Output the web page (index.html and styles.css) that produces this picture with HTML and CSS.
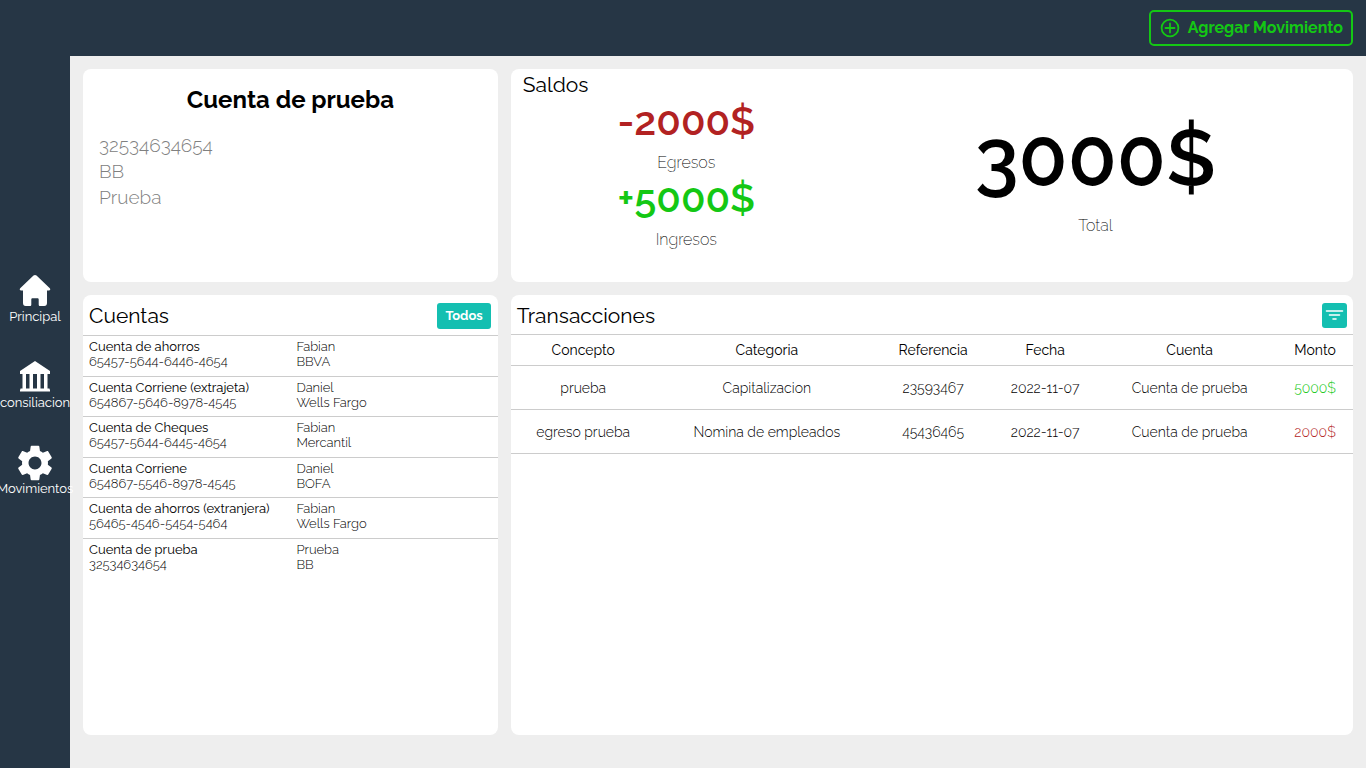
FILE: index.html
```html
<!DOCTYPE html>
<html lang="es">
<head>
<meta charset="utf-8">
<meta name="viewport" content="width=device-width, initial-scale=1">
<title>Cuentas</title>
<link rel="stylesheet" href="styles.css">
</head>
<body>
<div class="app">
  <header class="topbar">
    <button class="add-button" type="button">
      <svg class="add-icon" viewBox="0 0 20 20" fill="none" stroke="currentColor" stroke-width="1.8" aria-hidden="true"><circle cx="10" cy="10" r="8.4"/><path d="M10 5.500v9M5.500 10h9" stroke-linecap="round"/></svg>
      <span>Agregar Movimiento</span>
    </button>
  </header>
  <nav class="sidebar">
    <a class="nav-link" href="#principal">
      <svg class="nav-icon" viewBox="0 0 36 36" fill="currentColor" aria-hidden="true"><path d="M18 2c.6 0 1 .2 1.500.6l13.300 12.600c.9.900.5 2.300-.9 2.300h-1.900v12.500c0 2.100-1 3-2.700 3H23.200c-1 0-1.500-.5-1.500-1.500v-5c0-.8-.5-1.300-1.300-1.300h-4.800c-.8 0-1.300.5-1.300 1.300v5c0 1-.5 1.500-1.500 1.500H8.700C7 33 6 32.100 6 30V17.500H4.100c-1.400 0-1.800-1.400-.9-2.300L16.500 2.600C17 2.200 17.400 2 18 2z"/></svg>
      <span>Principal</span>
    </a>
    <a class="nav-link" href="#consiliacion">
      <svg class="nav-icon" viewBox="0 0 36 36" fill="currentColor" aria-hidden="true"><path d="M18 2 33 12v3H3v-3zM5.500 15H9v15H5.500zM12.500 15H16v15h-3.500zM20 15h3.500v15H20zM27 15h3.500v15H27zM3.500 29.500h29v1h.5v2H3v-2h.5z"/></svg>
      <span>consiliacion</span>
    </a>
    <a class="nav-link" href="#movimientos">
      <svg class="nav-icon" viewBox="2 2 20 20" fill="currentColor" aria-hidden="true"><path d="M19.140 12.940c.04-.3.060-.61.060-.94 0-.32-.020-.64-.070-.94l2.030-1.580c.18-.14.230-.41.120-.61l-1.920-3.320c-.12-.22-.37-.29-.59-.22l-2.390.96c-.5-.38-1.030-.7-1.620-.94l-.36-2.540c-.040-.24-.24-.41-.48-.41h-3.840c-.24 0-.43.170-.47.410l-.36 2.540c-.59.240-1.130.570-1.620.94l-2.390-.96c-.22-.080-.47 0-.59.220L2.740 8.870c-.12.210-.080.470.120.610l2.030 1.580c-.050.300-.090.630-.090.940s.020.640.070.94l-2.030 1.580c-.18.140-.23.410-.12.610l1.920 3.320c.12.220.37.290.59.220l2.390-.96c.5.380 1.030.7 1.620.94l.36 2.540c.050.240.24.410.48.410h3.840c.24 0 .44-.17.470-.41l.36-2.540c.59-.24 1.130-.56 1.620-.94l2.390.96c.22.080.47 0 .59-.22l1.920-3.320c.12-.22.070-.47-.12-.61l-2.010-1.580zM12 15.600c-1.980 0-3.600-1.620-3.600-3.600s1.620-3.600 3.600-3.600 3.600 1.620 3.600 3.600-1.620 3.600-3.600 3.600z"/></svg>
      <span>Movimientos</span>
    </a>
  </nav>
  <main class="content">
    <section class="card account">
      <h1 class="account-name">Cuenta de prueba</h1>
      <p class="account-line">32534634654</p>
      <p class="account-line">BB</p>
      <p class="account-line">Prueba</p>
    </section>
    <section class="card balances">
      <h2 class="card-title balances-title">Saldos</h2>
      <div class="balances-body">
        <div class="flows">
          <strong class="amount expense">-2000$</strong>
          <span class="amount-label">Egresos</span>
          <strong class="amount income">+5000$</strong>
          <span class="amount-label">Ingresos</span>
        </div>
        <div class="total">
          <strong class="total-amount">3000$</strong>
          <span class="amount-label">Total</span>
        </div>
      </div>
    </section>
    <section class="card">
      <div class="card-head">
        <h2 class="card-title">Cuentas</h2>
        <button class="all-button" type="button">Todos</button>
      </div>
      <ul class="accounts">
        <li class="account-row"><div><b class="row-name">Cuenta de ahorros</b><span>65457-5644-6446-4654</span></div><div><span>Fabian</span><span>BBVA</span></div></li>
        <li class="account-row"><div><b class="row-name">Cuenta Corriene (extrajeta)</b><span>654867-5646-8978-4545</span></div><div><span>Daniel</span><span>Wells Fargo</span></div></li>
        <li class="account-row"><div><b class="row-name">Cuenta de Cheques</b><span>65457-5644-6445-4654</span></div><div><span>Fabian</span><span>Mercantil</span></div></li>
        <li class="account-row"><div><b class="row-name">Cuenta Corriene</b><span>654867-5546-8978-4545</span></div><div><span>Daniel</span><span>BOFA</span></div></li>
        <li class="account-row"><div><b class="row-name">Cuenta de ahorros (extranjera)</b><span>56465-4546-5454-5464</span></div><div><span>Fabian</span><span>Wells Fargo</span></div></li>
        <li class="account-row"><div><b class="row-name">Cuenta de prueba</b><span>32534634654</span></div><div><span>Prueba</span><span>BB</span></div></li>
      </ul>
    </section>
    <section class="card">
      <div class="card-head">
        <h2 class="card-title">Transacciones</h2>
        <button class="filter-button" type="button" aria-label="Filtrar">
          <svg class="filter-icon" viewBox="0 0 19 19" stroke="currentColor" stroke-width="1.600" stroke-linecap="round" aria-hidden="true"><path d="M1.500 5h16M4.500 9h10M8 13h3"/></svg>
        </button>
      </div>
      <table class="movements">
        <colgroup><col class="col-concept"><col class="col-category"><col class="col-reference"><col class="col-date"><col class="col-account"><col class="col-amount"></colgroup>
        <thead>
          <tr><th>Concepto</th><th>Categoria</th><th>Referencia</th><th>Fecha</th><th>Cuenta</th><th>Monto</th></tr>
        </thead>
        <tbody>
          <tr><td>prueba</td><td>Capitalizacion</td><td>23593467</td><td>2022-11-07</td><td>Cuenta de prueba</td><td class="income">5000$</td></tr>
          <tr><td>egreso prueba</td><td>Nomina de empleados</td><td>45436465</td><td>2022-11-07</td><td>Cuenta de prueba</td><td class="expense">2000$</td></tr>
        </tbody>
      </table>
    </section>
  </main>
</div>
</body>
</html>
```
FILE: styles.css
```css
* { box-sizing: border-box; }
body {
  margin: 0;
  font-family: Raleway, Lato, "Open Sans", sans-serif;
  background: #eee;
  color: #000;
}
h1, h2, p, ul { margin: 0; padding: 0; }
button { font: inherit; cursor: pointer; }

.app {
  display: grid;
  grid-template: 56px 1fr / 70px minmax(0, 1fr);
  min-height: 100vh;
}
.topbar {
  grid-column: 1 / -1;
  display: flex;
  align-items: center;
  justify-content: flex-end;
  padding: 0 13px;
  background: #263645;
}
.add-button {
  display: flex;
  align-items: center;
  gap: 8px;
  height: 36px;
  padding: 0 8px 0 9px;
  border: 2px solid #14c814;
  border-radius: 5px;
  background: none;
  color: #14c814;
  font-size: 16px;
  font-weight: 700;
  line-height: 20px;
  white-space: nowrap;
}
.add-icon { width: 20px; height: 20px; }

.sidebar {
  display: flex;
  flex-direction: column;
  justify-content: center;
  gap: 35px;
  padding-bottom: 55px;
  background: #263645;
}
.nav-link {
  display: flex;
  flex-direction: column;
  align-items: center;
  color: #fff;
  font-size: 13px;
  line-height: 15px;
  text-decoration: none;
}
.nav-icon { width: 36px; height: 36px; }

.content {
  display: grid;
  grid-template: 33fr 68fr / 33fr 67fr;
  gap: 13px;
  padding: 13px 13px 33px;
}
.card {
  min-width: 0;
  border-radius: 8px;
  background: #fff;
}
.card-title { font-size: 21px; font-weight: 400; line-height: 26px; }
.card-head {
  display: flex;
  align-items: center;
  justify-content: space-between;
  height: 39px;
  padding: 2px 6px 0;
}

.account { padding: 16px; }
.account-name {
  margin-bottom: 17px;
  font-size: 24px;
  line-height: 30px;
  text-align: center;
}
.account-line {
  color: #808080;
  font-size: 19px;
  font-weight: 300;
  line-height: 26px;
}

.balances-title { padding: 3px 12px 0; }
.balances-body {
  display: grid;
  grid-template-columns: 351fr 467fr;
  padding-right: 24px;
}
.flows, .total { display: flex; flex-direction: column; align-items: center; }
.total { padding-top: 12px; }
.amount { font-size: 40px; font-weight: 600; line-height: 46px; }
.amount-label {
  margin-top: 6px;
  font-size: 16px;
  font-weight: 200;
  line-height: 25px;
}
.total-amount { font-size: 80px; font-weight: 600; line-height: 97px; }
.income { color: #14c814; }
.expense { color: #b22222; }

.all-button {
  height: 26px;
  margin-right: 1px;
  padding: 0 8px;
  border: 0;
  border-radius: 3px;
  background: #14bfb1;
  color: #fff;
  font-size: 13px;
  font-weight: 700;
}
.filter-button {
  display: flex;
  width: 25px;
  height: 25px;
  padding: 3px;
  border: 0;
  border-radius: 3px;
  background: #14bfb1;
  color: #fff;
}
.filter-icon { width: 19px; height: 19px; }

.accounts { margin-top: 1px; list-style: none; }
.account-row {
  display: grid;
  grid-template-columns: 1fr 1fr;
  padding: 3px 0 7px;
  border-top: 1px solid #ccc;
  font-size: 13px;
  font-weight: 300;
  line-height: 15px;
}
.account-row:nth-child(even) { padding-bottom: 6px; }
.account-row > div { display: flex; flex-direction: column; padding-left: 6px; }
.row-name { font-weight: 400; }

.movements {
  width: 100%;
  border-collapse: collapse;
  table-layout: fixed;
  font-size: 14px;
  text-align: center;
}
.col-concept { width: 17.2%; }
.col-category { width: 26.4%; }
.col-reference { width: 13.1%; }
.col-date { width: 13.5%; }
.col-account { width: 20.8%; }
.col-amount { width: 9%; }
.movements th, .movements td { padding: 0; border-bottom: 1px solid #ccc; }
.movements th { height: 31px; border-top: 1px solid #ccc; font-weight: 400; }
.movements td { height: 44px; font-weight: 300; }
```
